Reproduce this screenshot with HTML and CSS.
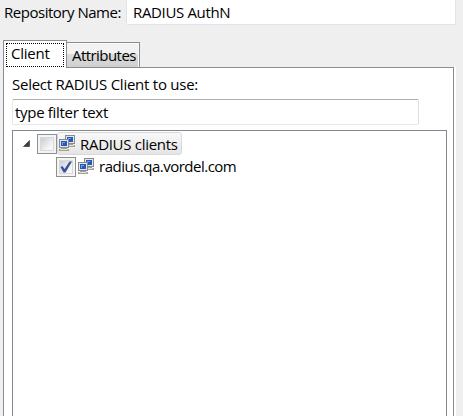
FILE: index.html
```
<!DOCTYPE html>
<html lang="en">
<head>
<meta charset="utf-8">
<title>RADIUS AuthN</title>
<link rel="stylesheet" href="styles.css">
</head>
<body>
<svg class="defs" width="0" height="0" aria-hidden="true">
  <defs>
    <g id="monitor">
      <path d="M2 9H8V10H10V12H0V10H2Z" fill="#a5a29b"/>
      <path d="M1.500 10.500H8.500" stroke="#e4e1da"/>
      <rect x=".5" y=".5" width="9" height="8" fill="#e9e5dc" stroke="#858a93"/>
      <rect x="2" y="2" width="6" height="5" fill="#2459bd"/>
      <path d="M3 3H6V4H4V6H3Z" fill="#6ea0ed"/>
    </g>
    <g id="computers">
      <use href="#monitor" x="6" y="0"/>
      <use href="#monitor" x="0" y="4"/>
    </g>
  </defs>
</svg>
<header class="name-row">
  <label class="name-label">Repository Name:</label>
  <div class="name-field">RADIUS AuthN</div>
</header>
<nav class="tabs">
  <div class="tab active"><div class="focus">Client</div></div>
  <div class="tab inactive">Attributes</div>
</nav>
<main class="panel">
  <div class="prompt">Select RADIUS Client to use:</div>
  <div class="filter">type filter text</div>
  <div class="tree">
    <div class="row">
      <svg class="arrow" width="7" height="7"><path d="M6.500 .5V6.500H.5Z" fill="#404040" stroke="#262626" stroke-width=".6"/></svg>
      <div class="check"><i></i></div>
      <div class="selected">
        <svg class="icon" width="16" height="16"><use href="#computers"/></svg>
        <span class="root-name">RADIUS clients</span>
      </div>
    </div>
    <div class="row child">
      <div class="check"><i></i><svg class="tick" width="14" height="14"><path d="M1.500 7L3.500 6L5.500 9L10.500 1.500H13L6.500 12.500H4.500Z" fill="#3c519b"/></svg></div>
      <svg class="icon child-icon" width="16" height="16"><use href="#computers"/></svg>
      <span class="child-name">radius.qa.vordel.com</span>
    </div>
  </div>
</main>
</body>
</html>
```

FILE: styles.css
```
* { box-sizing: border-box; }
body {
  margin: 0;
  width: 463px;
  height: 416px;
  overflow: hidden;
  display: flex;
  flex-direction: column;
  background: #efefef;
  color: #000;
  font: 15px/20px "Open Sans", "Noto Sans", sans-serif;
  white-space: nowrap;
}
.defs { position: absolute; }
.name-row { display: flex; height: 40px; flex: none; }
.name-label { width: 126px; padding: 2px 0 0 4px; letter-spacing: -.48px; }
.name-field {
  width: 330px;
  height: 25px;
  padding: 2px 0 0 6px;
  background: #fff;
  border: 1px solid #e2e3ea;
  border-top: 0;
  border-radius: 0 0 2px 2px;
  letter-spacing: -.35px;
}
.tabs { display: flex; align-items: flex-end; height: 27px; flex: none; padding-left: 3px; }
.active {
  width: 64px;
  height: 28px;
  margin-bottom: -1px;
  padding: 2px;
  background: #fff;
  border: 1px solid #898c95;
  border-bottom: 0;
  z-index: 1;
}
.focus { height: 24px; padding: 0 0 0 4px; border: 1px dotted #000; line-height: 18px; letter-spacing: -.25px; }
.inactive {
  width: 73px;
  height: 25px;
  padding: 2px 0 0 5px;
  border: 1px solid #898c95;
  border-left: 0;
  border-bottom: 0;
  background: linear-gradient(#f2f2f2 0 45%, #dddddd 45%, #cfcfcf);
  box-shadow: inset -1px 1px #fafafa;
  letter-spacing: -.55px;
}
.panel {
  flex: 1;
  display: flex;
  flex-direction: column;
  width: 451px;
  margin-left: 3px;
  padding: 7px 6px 0 8px;
  background: #fff;
  border: 1px solid #898c95;
  border-bottom: 0;
  box-shadow: 2px 0 #fff;
}
.prompt { height: 24px; line-height: 18px; letter-spacing: -.25px; }
.filter {
  width: 407px;
  height: 26px;
  padding: 2px 0 0 2px;
  border: 1px solid #e2e8ee;
  border-top-color: #abadb3;
  border-right-color: #dbdfe6;
  border-radius: 2px;
  letter-spacing: -.3px;
}
.tree {
  flex: 1;
  margin-top: 5px;
  padding: 1px 0 0 10px;
  border: 1px solid #828790;
  border-bottom: 0;
}
.row { display: flex; height: 23px; }
.arrow { margin: 8px 7px 0 0; }
.check { position: relative; width: 20px; height: 20px; margin-top: 2px; padding: 2px; border: 1px solid #8e8f8f; background: #f4f4f4; }
.check i { display: block; width: 14px; height: 14px; border: 1px solid #d7d9dc; background: linear-gradient(135deg, #c9cdd3, #f6f6f6 75%); }
.tick { position: absolute; left: 2px; top: 2px; }
.icon { flex: none; }
.selected {
  display: flex;
  width: 125px;
  height: 23px;
  padding: 2px 0 0 1px;
  border: 1px solid #d9d9d9;
  border-radius: 3px;
  background: linear-gradient(#f9f9f9, #e5e5e5);
}
.root-name { margin-left: 5px; line-height: 18px; letter-spacing: -.3px; }
.child { padding-left: 33px; }
.child-icon { margin: 3px 0 0 2px; }
.child-name { margin: 1px 0 0 5px; letter-spacing: -.5px; }
```
